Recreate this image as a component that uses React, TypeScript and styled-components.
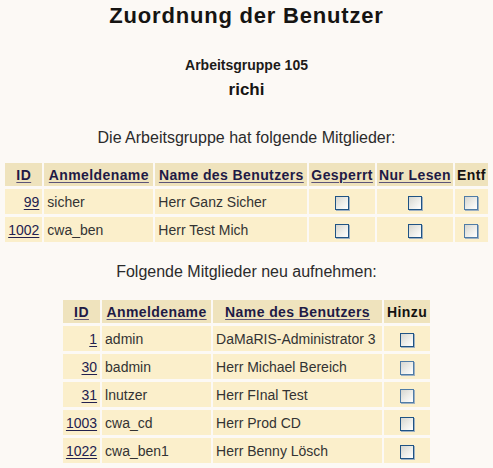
import React from 'react';
import styled, { createGlobalStyle } from 'styled-components';

const GlobalStyle = createGlobalStyle`
  html, body {
    margin: 0;
    padding: 0;
    background: #fcf9f5;
  }
  body {
    font-family: 'Liberation Sans', Arial, sans-serif;
    color: #333;
  }
`;

////////////////////// styled [START]
const Page = styled.div`
  width: 493px;
  padding-top: 4px;
  text-align: center;
`;

const Title = styled.h1`
  margin: 0;
  font-size: 22px;
  line-height: 24px;
  font-weight: bold;
  letter-spacing: 0.8px;
  color: #161412;
`;

const Group = styled.div`
  margin-top: 29px;
  font-size: 14px;
  line-height: 16px;
  font-weight: bold;
  color: #1d1b19;
`;

const GroupName = styled.div`
  margin-top: 7px;
  font-size: 17px;
  line-height: 20px;
  font-weight: bold;
  color: #161412;
`;

type IntroType = { gap: number };
const Intro = styled.p<IntroType>`
  margin: ${({ gap }) => gap}px 0 0;
  font-size: 16px;
  line-height: 18px;
  color: #2b2b2b;
`;

type TableType = { gap: number };
const Table = styled.table<TableType>`
  margin: ${({ gap }) => gap}px auto 0;
  border-collapse: separate;
  border-spacing: 2px 3px;
`;

type HeadType = { w: number };
const Head = styled.th<HeadType>`
  box-sizing: border-box;
  width: ${({ w }) => w}px;
  height: 23px;
  padding: 0 2px;
  background: #efe3bd;
  text-align: center;
  font-size: 14px;
  font-weight: bold;
  letter-spacing: 0.4px;
  white-space: nowrap;
  color: #141210;
`;

const HeadLink = styled.a`
  color: #1e1a45;
  text-decoration: underline;
  text-decoration-color: #5c5478;
  text-underline-offset: 2px;
`;

type CellType = { align?: 'left' | 'right' | 'center' };
const Cell = styled.td<CellType>`
  box-sizing: border-box;
  height: 25px;
  padding: 0 3px;
  background: #fbefcb;
  text-align: ${({ align = 'left' }) => align};
  font-size: 14px;
  white-space: nowrap;
  color: #333;
  vertical-align: middle;
`;

const IdLink = styled.a`
  color: #23214f;
  text-decoration: underline;
  text-underline-offset: 2px;
`;

type BoxType = { faded?: boolean };
const Box = styled.span<BoxType>`
  display: inline-block;
  box-sizing: border-box;
  width: 14px;
  height: 14px;
  margin-top: 2px;
  vertical-align: middle;
  border: 1px solid ${({ faded }) => (faded ? '#4f7ca6' : '#1f5384')};
  background: linear-gradient(135deg, #d6d6d0 0%, #eeeeea 55%, #ffffff 100%);
  box-shadow: 1px 1px 0 #9db0c2;
`;
////////////////////// styled [END]

type Member = {
  id: string;
  login: string;
  name: string;
  faded?: boolean;
};

const members: Member[] = [
  { id: '99', login: 'sicher', name: 'Herr Ganz Sicher' },
  { id: '1002', login: 'cwa_ben', name: 'Herr Test Mich' },
];

const candidates: Member[] = [
  { id: '1', login: 'admin', name: 'DaMaRIS-Administrator 3' },
  { id: '30', login: 'badmin', name: 'Herr Michael Bereich', faded: true },
  { id: '31', login: 'lnutzer', name: 'Herr FInal Test', faded: true },
  { id: '1003', login: 'cwa_cd', name: 'Herr Prod CD' },
  { id: '1022', login: 'cwa_ben1', name: 'Herr Benny Lösch' },
];

const App: React.FC = () => {
  return (
    <Page>
      <GlobalStyle />
      <Title>Zuordnung der Benutzer</Title>
      <Group>Arbeitsgruppe 105</Group>
      <GroupName>richi</GroupName>

      <Intro gap={29}>Die Arbeitsgruppe hat folgende Mitglieder:</Intro>
      <Table gap={13}>
        <thead>
          <tr>
            <Head w={37}><HeadLink href="#">ID</HeadLink></Head>
            <Head w={109}><HeadLink href="#">Anmeldename</HeadLink></Head>
            <Head w={152}><HeadLink href="#">Name des Benutzers</HeadLink></Head>
            <Head w={65}><HeadLink href="#">Gesperrt</HeadLink></Head>
            <Head w={76}><HeadLink href="#">Nur Lesen</HeadLink></Head>
            <Head w={31}>Entf</Head>
          </tr>
        </thead>
        <tbody>
          {members.map((m) => (
            <tr key={m.id}>
              <Cell align="right"><IdLink href="#">{m.id}</IdLink></Cell>
              <Cell>{m.login}</Cell>
              <Cell>{m.name}</Cell>
              <Cell align="center"><Box /></Cell>
              <Cell align="center"><Box /></Cell>
              <Cell align="center"><Box faded /></Cell>
            </tr>
          ))}
        </tbody>
      </Table>

      <Intro gap={18}>Folgende Mitglieder neu aufnehmen:</Intro>
      <Table gap={16}>
        <thead>
          <tr>
            <Head w={37}><HeadLink href="#">ID</HeadLink></Head>
            <Head w={109}><HeadLink href="#">Anmeldename</HeadLink></Head>
            <Head w={169}><HeadLink href="#">Name des Benutzers</HeadLink></Head>
            <Head w={46}>Hinzu</Head>
          </tr>
        </thead>
        <tbody>
          {candidates.map((m) => (
            <tr key={m.id}>
              <Cell align="right"><IdLink href="#">{m.id}</IdLink></Cell>
              <Cell>{m.login}</Cell>
              <Cell>{m.name}</Cell>
              <Cell align="center"><Box faded={m.faded} /></Cell>
            </tr>
          ))}
        </tbody>
      </Table>
    </Page>
  );
};

export default App;
